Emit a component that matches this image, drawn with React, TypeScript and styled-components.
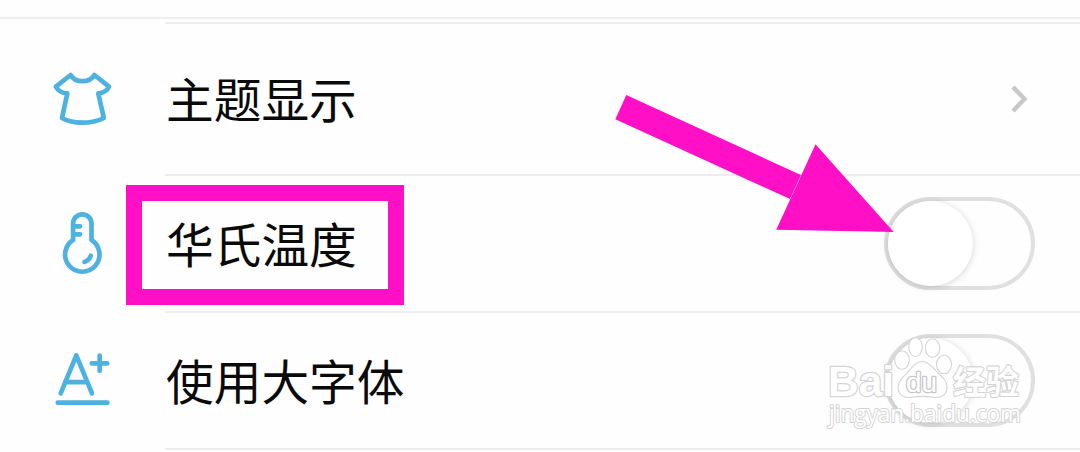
import React from "react";
import styled, { createGlobalStyle } from 'styled-components';

const GlobalStyle = createGlobalStyle`
    * { box-sizing: border-box; }
    body {
        margin: 0;
        background-color: #fefefe;
        overflow: hidden;
    }
`;

const Page = styled.main`
    position: relative;
    height: 452px;
    padding-top: 17px;
    overflow: hidden;
    color: #0a0a0a;
    font-family: 'Noto Sans CJK SC', sans-serif;
`;
const List = styled.ul`
    margin: 0;
    padding: 3px 0 0;
    border-top: 2px solid #eee;
    list-style: none;
`;
const Row = styled.li<{ $height: number }>`
    display: flex;
    height: ${(p) => p.$height}px;
`;
const IconCell = styled.div`
    display: flex;
    align-items: center;
    flex: 0 0 165px;
    padding: 2px 0 0 50px;
`;
const Body = styled.div`
    display: flex;
    flex: 1;
    align-items: center;
    justify-content: space-between;
    padding-right: 45px;
    border-top: 2px solid #eee;
`;
const Label = styled.span`
    position: relative;
    margin-bottom: 2px;
    padding-left: 1px;
    font-size: 47.7px;
    line-height: 70px;
    white-space: nowrap;
`;
const Marker = styled.span`
    position: absolute;
    left: -39px;
    top: -23px;
    width: 278px;
    height: 120px;
    border: 16px solid #ff10c6;
`;
const Switch = styled.button`
    display: flex;
    width: 151px;
    height: 93px;
    padding: 0;
    border: 4px solid #e0e0e0;
    border-radius: 47px;
    background: #fefefe;
`;
const Knob = styled.span`
    width: 85px;
    height: 85px;
    border-radius: 50%;
    background: #fff;
    box-shadow: 0 1px 7px rgba(0, 0, 0, 0.17);
`;
const Arrow = styled.svg`
    position: absolute;
    left: 610px;
    top: 90px;
`;
const Watermark = styled.svg`
    position: absolute;
    left: 820px;
    top: 330px;
`;
const LastLine = styled.div`
    height: 2px;
    margin-left: 165px;
    background: #eee;
`;
const Icon = styled.svg`
    display: block;
    fill: none;
    stroke: #4db2e0;
    stroke-width: 4.7;
    stroke-linecap: round;
    stroke-linejoin: round;
`;
const ChevronIcon = styled.svg`
    margin-right: 5px;
    fill: none;
    stroke: #c8c8c8;
    stroke-width: 4.4;
`;

const ShirtIcon = () => (
    <Icon width="64" height="64">
        <path d="M20.6 8Q24 14.2 32.3 14.2Q41 14.2 44.4 8L59 19.7Q56 25.8 48.3 26.4L53.8 51Q45 55.7 32.3 55.7Q20 55.7 12 51L17.3 26.4Q9 25.8 5.9 19.7Z" />
    </Icon>
);

const ThermometerIcon = () => (
    <Icon width="64" height="64">
        <path d="M23.1 28V11.5a9.2 9.2 0 0 1 18.4 0V28A17.2 17.2 0 1 1 23.1 28Z" />
        <path d="M24 14.3h6M24 22.3h6M40.8 43.7Q39.5 48.2 34.6 49.9" />
    </Icon>
);

const FontIcon = () => (
    <Icon width="64" height="64">
        <path d="M10.7 44.3L26.3 6.3L42 44.3M15 33.2H37.5M41.8 14.3H57.2M49.7 6.5V21.8M7.8 53.7H57.4" />
    </Icon>
);

const Chevron = () => (
    <ChevronIcon width="20" height="30">
        <path d="M3 3L14.5 15L3 27" />
    </ChevronIcon>
);

type Prop = {
    icon : React.ReactNode
    title : string
    height : number
    marked? : boolean
    children? : React.ReactNode
}

const SettingRow = ({ icon, title, height, marked, children } : Prop) => (
    <Row $height={height}>
        <IconCell>{icon}</IconCell>
        <Body>
            <Label>
                {title}
                {marked && <Marker />}
            </Label>
            {children}
        </Body>
    </Row>
);

const Toggle = () => <Switch type="button" role="switch" aria-checked={false}><Knob /></Switch>;

const BaiduMark = () => (
    <Watermark width="220" height="110" fill="#fff" stroke="#d4d4d4" strokeWidth="1.1" strokeLinejoin="round">
        <g fontWeight="700">
            <text x="8" y="66" fontSize="43" fontFamily="Liberation Sans, sans-serif" textLength="66" lengthAdjust="spacingAndGlyphs" paintOrder="stroke" strokeWidth="2.4">Bai</text>
            <ellipse cx="82" cy="30" rx="7.3" ry="9.3" />
            <ellipse cx="95.5" cy="17" rx="6.8" ry="9.5" />
            <ellipse cx="112.5" cy="18" rx="7.2" ry="9.3" />
            <ellipse cx="124" cy="34.5" rx="7.5" ry="9.3" />
            <path d="M102.5 31.5C109 31.5 114 39 118 43C123 47.5 127 51 127 57C127 64 122 68 115 67.5C107 66 98 66 90 67.5C83 68 78 64 78 57C78 50 84 47 88 42C92 37 96 31.5 102.5 31.5Z" />
            <text x="86" y="62" fontSize="27" fontWeight="400" fontFamily="Liberation Sans, sans-serif" textLength="31" lengthAdjust="spacingAndGlyphs" paintOrder="stroke" stroke="#c8c8c8" strokeWidth="2.6">du</text>
            <text x="133" y="64" fontSize="33" fontFamily="Noto Sans CJK SC, sans-serif" paintOrder="stroke" strokeWidth="2.2">经验</text>
        </g>
        <text x="9" y="92" fontSize="23" fontFamily="Open Sans, sans-serif" paintOrder="stroke" textLength="192" lengthAdjust="spacingAndGlyphs" strokeWidth="2">jingyan.baidu.com</text>
    </Watermark>
);

const App = () => (
    <Page>
        <GlobalStyle />
        <List>
            <SettingRow icon={<ShirtIcon />} title="主题显示" height={152}>
                <Chevron />
            </SettingRow>
            <SettingRow icon={<ThermometerIcon />} title="华氏温度" height={137} marked>
                <Toggle />
            </SettingRow>
            <SettingRow icon={<FontIcon />} title="使用大字体" height={137}>
                <Toggle />
            </SettingRow>
        </List>
        <LastLine />
        <Arrow width="290" height="150" fill="#ff10c6">
            <path d="M16.3 5L191 85L180 109L5.3 29.3Z" />
            <path d="M283.7 142L205.5 54.3L166.2 139.7Z" />
        </Arrow>
        <BaiduMark />
    </Page>
);

export default App;
